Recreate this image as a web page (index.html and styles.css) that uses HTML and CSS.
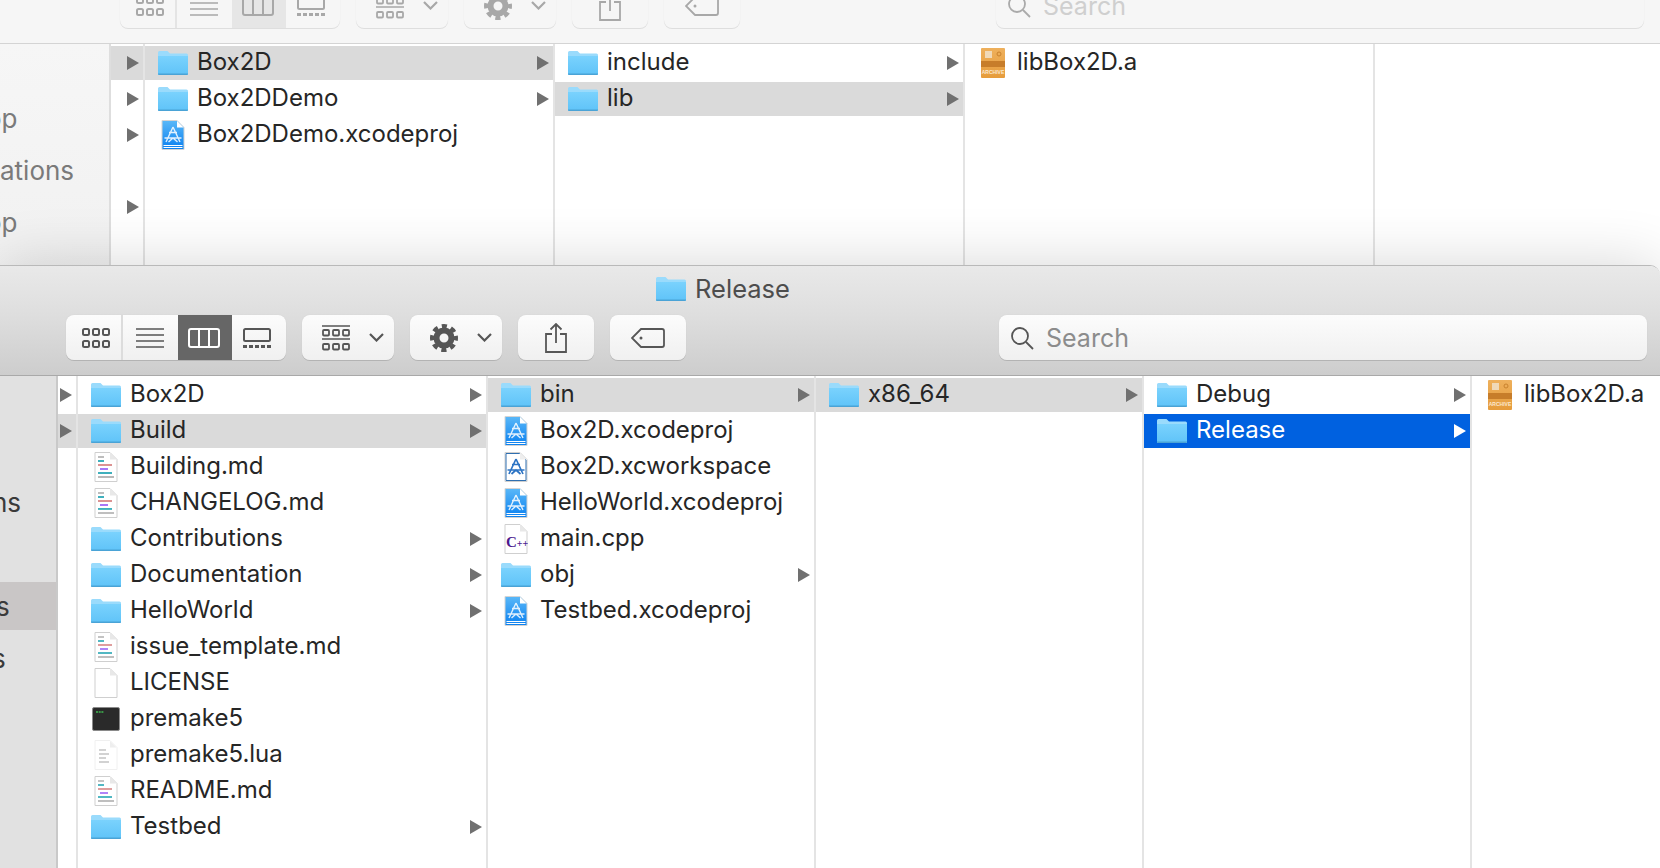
FILE: index.html
```html
<!DOCTYPE html>
<html lang="en">
<head>
<meta charset="UTF-8">
<title>Release</title>
<link rel="stylesheet" href="styles.css">
</head>
<body>
<svg class="defs">
  <defs>
    <linearGradient id="fold" x1="0" y1="0" x2="0" y2="1"><stop offset="0" stop-color="#7ad2fd"/><stop offset="1" stop-color="#5fc3f8"/></linearGradient>
    <linearGradient id="xblue" x1="0" y1="0" x2="0" y2="1"><stop offset="0" stop-color="#5ab8f8"/><stop offset="1" stop-color="#0a80f0"/></linearGradient>
    <linearGradient id="arch" x1="0" y1="0" x2="0" y2="1"><stop offset="0" stop-color="#eeb05c"/><stop offset="1" stop-color="#e69c3c"/></linearGradient>
  </defs>
  <symbol id="folder" viewBox="0 0 30 24">
    <path d="M1.5 0h8l2.5 2.5h16.5A1.5 1.5 0 0 1 30 4v18.5a1.5 1.5 0 0 1-1.5 1.5h-27A1.5 1.5 0 0 1 0 22.500V1.500A1.500 1.500 0 0 1 1.500 0z" fill="#9adbfc"/>
    <path d="M0 5h30v17.500a1.500 1.500 0 0 1-1.500 1.500h-27A1.500 1.500 0 0 1 0 22.500z" fill="url(#fold)"/>
    <path d="M0 22.500h30v.3a1.200 1.200 0 0 1-1.200 1.200H1.200A1.200 1.200 0 0 1 0 22.800z" fill="#4aa3d6"/>
  </symbol>
  <symbol id="xcode" viewBox="0 0 24 30">
    <path d="M1 .5h15l7 7v22H1z" fill="url(#xblue)" stroke="#d4d4d4"/>
    <path d="M16 1v6.500h6.500z" fill="#fff"/>
    <path d="M2.500 25.500h19M2.500 27.500h19" stroke="#fff" fill="none"/>
    <path d="M12 7l-7 15M12 7l7 15M3.500 18h17M8 12.500h8M7.500 22l4.500-4 4.500 4" stroke="#fff" stroke-opacity=".85" stroke-width="1.400" fill="none"/>
  </symbol>
  <symbol id="workspace" viewBox="0 0 24 30">
    <path d="M1 .5h15l7 7v22H1z" fill="#fff" stroke="#cfcfcf"/>
    <path d="M2 1.500h13.500l6.500 6.500v20.500H2z" fill="#fff" stroke="#2f6fb0"/>
    <path d="M16 1v6.500h6.500z" fill="#eee"/>
    <path d="M12 7l-7 15M12 7l7 15M3.500 18h17M8 12.500h8M7.500 22l4.500-4 4.500 4" stroke="#2d74c4" stroke-width="1.700" fill="none"/>
  </symbol>
  <symbol id="markdown" viewBox="0 0 24 30">
    <path d="M1 .5h15l7 7v22H1z" fill="#fff" stroke="#cfcfcf"/>
    <path d="M16 1v6.500h6.500z" fill="#e8e8e8"/>
    <path d="M4 5h6" stroke="#bdbdbd" stroke-width="1.800"/>
    <path d="M4 9h6" stroke="#3fb0bd" stroke-width="1.800"/>
    <path d="M4 13h14" stroke="#dc9393" stroke-width="1.800"/>
    <path d="M6 17h8" stroke="#a877f8" stroke-width="1.800"/>
    <path d="M4 21h14" stroke="#3fb0bd" stroke-width="1.800"/>
    <path d="M4 25h16" stroke="#b8b8b8" stroke-width="1.800"/>
  </symbol>
  <symbol id="blank" viewBox="0 0 24 30">
    <path d="M1 .5h15l7 7v22H1z" fill="#fff" stroke="#cfcfcf"/>
    <path d="M16 1v6.500h6.500z" fill="#e8e8e8"/>
  </symbol>
  <symbol id="plain" viewBox="0 0 24 30">
    <path d="M1 .5h15l7 7v22H1z" fill="#fff" stroke="#f0f0f0"/>
    <path d="M16 1v6.500h6.500z" fill="#eee"/>
    <path d="M5 10h7M5 14h10M5 18h7M5 22h10" stroke="#c4c4c4" stroke-width="1.300"/>
  </symbol>
  <symbol id="exec" viewBox="0 0 28 24">
    <rect x=".5" y=".5" width="27" height="23" rx="1.500" fill="#2a2a2a" stroke="#8a8a8a"/>
    <path d="M4 5h8" stroke="#3fb950" stroke-width="1.500" stroke-dasharray="2 .7"/>
  </symbol>
  <symbol id="archive" viewBox="0 0 24 30">
    <rect width="24" height="30" rx="1" fill="url(#arch)"/>
    <rect x="4" y="3" width="7" height="7" fill="#f0d9b8"/>
    <circle cx="18" cy="6" r="2" fill="none" stroke="#c9822e"/>
    <rect y="13" width="24" height="6" fill="#c77d2a"/>
  </symbol>
  <symbol id="t-icons" viewBox="0 0 28 20">
    <g fill="none" stroke="currentColor" stroke-width="2"><rect x="1" y="1" width="6" height="6" rx="1.500"/><rect x="11" y="1" width="6" height="6" rx="1.500"/><rect x="21" y="1" width="6" height="6" rx="1.500"/><rect x="1" y="13" width="6" height="6" rx="1.500"/><rect x="11" y="13" width="6" height="6" rx="1.500"/><rect x="21" y="13" width="6" height="6" rx="1.500"/></g>
  </symbol>
  <symbol id="t-list" viewBox="0 0 28 20">
    <path d="M0 1h28M0 7h28M0 13h28M0 19h28" stroke="currentColor" stroke-width="1.600" fill="none"/>
  </symbol>
  <symbol id="t-columns" viewBox="0 0 32 20">
    <rect x="1" y="1" width="30" height="18" rx="2" fill="none" stroke="currentColor" stroke-width="2"/>
    <path d="M11 1v18M21 1v18" stroke="currentColor" stroke-width="2"/>
  </symbol>
  <symbol id="t-gallery" viewBox="0 0 28 20">
    <rect x="1" y="1" width="26" height="12" rx="1.500" fill="none" stroke="currentColor" stroke-width="2"/>
    <path d="M0 18.500h28" stroke="currentColor" stroke-width="3" stroke-dasharray="4 2"/>
  </symbol>
  <symbol id="t-group" viewBox="0 0 28 26">
    <path d="M0 1h28M0 14h28" stroke="currentColor" stroke-width="1.600"/>
    <g fill="none" stroke="currentColor" stroke-width="1.800"><rect x="1" y="5" width="6" height="5.500" rx="1"/><rect x="11" y="5" width="6" height="5.500" rx="1"/><rect x="21" y="5" width="6" height="5.500" rx="1"/><rect x="1" y="19" width="6" height="5.500" rx="1"/><rect x="11" y="19" width="6" height="5.500" rx="1"/><rect x="21" y="19" width="6" height="5.500" rx="1"/></g>
  </symbol>
  <symbol id="t-chevron" viewBox="0 0 15 9">
    <path d="M1 1l6.500 6.500L14 1" fill="none" stroke="currentColor" stroke-width="2.200"/>
  </symbol>
  <symbol id="t-gear" viewBox="0 0 28 28">
    <circle cx="14" cy="14" r="7.500" fill="none" stroke="currentColor" stroke-width="6"/>
    <circle cx="14" cy="14" r="12" fill="none" stroke="currentColor" stroke-width="4" stroke-dasharray="5.200 4.225" stroke-dashoffset="2.600"/>
  </symbol>
  <symbol id="t-share" viewBox="0 0 22 30">
    <path d="M7 11H1v18h20V11h-6M11 20V1M5.500 6.500L11 1l5.500 5.500" fill="none" stroke="currentColor" stroke-width="1.800"/>
  </symbol>
  <symbol id="t-tag" viewBox="0 0 34 20">
    <path d="M10 1h21a2 2 0 0 1 2 2v14a2 2 0 0 1-2 2H10L1 10z" fill="none" stroke="currentColor" stroke-width="1.800"/>
    <circle cx="10" cy="10" r="1.500" fill="currentColor"/>
  </symbol>
  <symbol id="t-search" viewBox="0 0 24 24">
    <circle cx="10" cy="10" r="8" fill="none" stroke="currentColor" stroke-width="1.800"/>
    <path d="M16 16l7 7" stroke="currentColor" stroke-width="1.800"/>
  </symbol>
</svg>

<!-- window behind -->
<div class="window back">
  <div class="titlebar"></div>
  <div class="toolbar">
    <div class="seg">
      <div class="seg-item first"><svg class="t-icons"><use href="#t-icons"/></svg></div>
      <div class="seg-item second"><svg class="t-list"><use href="#t-list"/></svg></div>
      <div class="seg-item active"><svg class="t-columns"><use href="#t-columns"/></svg></div>
      <div class="seg-item fourth"><svg class="t-gallery"><use href="#t-gallery"/></svg></div>
    </div>
    <div class="btn drop"><svg class="t-group"><use href="#t-group"/></svg><svg class="t-chevron"><use href="#t-chevron"/></svg></div>
    <div class="btn drop"><svg class="t-gear"><use href="#t-gear"/></svg><svg class="t-chevron"><use href="#t-chevron"/></svg></div>
    <div class="btn"><svg class="t-share"><use href="#t-share"/></svg></div>
    <div class="btn"><svg class="t-tag"><use href="#t-tag"/></svg></div>
    <div class="search"><svg class="t-search"><use href="#t-search"/></svg><span>Search</span></div>
  </div>
  <div class="browser">
    <div class="sidebar">
      <div class="side-row cut-op">op</div>
      <div class="side-row">ations</div>
      <div class="side-row cut-op">op</div>
    </div>
    <div class="strip">
      <div class="strip-row on"><i class="arrow"></i></div>
      <div class="strip-row"><i class="arrow"></i></div>
      <div class="strip-row"><i class="arrow"></i></div>
      <div class="strip-row"></div>
      <div class="strip-row"><i class="arrow"></i></div>
    </div>
    <div class="col">
      <div class="row on"><svg class="ic-folder"><use href="#folder"/></svg><span>Box2D</span><i class="arrow"></i></div>
      <div class="row"><svg class="ic-folder"><use href="#folder"/></svg><span>Box2DDemo</span><i class="arrow"></i></div>
      <div class="row"><svg class="ic-file"><use href="#xcode"/></svg><span>Box2DDemo.xcodeproj</span></div>
    </div>
    <div class="col">
      <div class="row"><svg class="ic-folder"><use href="#folder"/></svg><span>include</span><i class="arrow"></i></div>
      <div class="row on"><svg class="ic-folder"><use href="#folder"/></svg><span>lib</span><i class="arrow"></i></div>
    </div>
    <div class="col">
      <div class="row"><svg class="ic-file" viewBox="0 0 24 30"><use href="#archive"/><text x="12" y="26" class="archive-text">ARCHIVE</text></svg><span>libBox2D.a</span></div>
    </div>
    <div class="col last"></div>
  </div>
</div>

<!-- front window -->
<div class="window front">
  <div class="titlebar"><svg class="ic-title"><use href="#folder"/></svg><span>Release</span></div>
  <div class="toolbar">
    <div class="seg">
      <div class="seg-item first"><svg class="t-icons"><use href="#t-icons"/></svg></div>
      <div class="seg-item second"><svg class="t-list"><use href="#t-list"/></svg></div>
      <div class="seg-item active"><svg class="t-columns"><use href="#t-columns"/></svg></div>
      <div class="seg-item fourth"><svg class="t-gallery"><use href="#t-gallery"/></svg></div>
    </div>
    <div class="btn drop"><svg class="t-group"><use href="#t-group"/></svg><svg class="t-chevron"><use href="#t-chevron"/></svg></div>
    <div class="btn drop"><svg class="t-gear"><use href="#t-gear"/></svg><svg class="t-chevron"><use href="#t-chevron"/></svg></div>
    <div class="btn"><svg class="t-share"><use href="#t-share"/></svg></div>
    <div class="btn"><svg class="t-tag"><use href="#t-tag"/></svg></div>
    <div class="search"><svg class="t-search"><use href="#t-search"/></svg><span>Search</span></div>
  </div>
  <div class="browser">
    <div class="sidebar">
      <div class="side-row cut-ns">ns</div>
      <div class="side-row"></div>
      <div class="side-row on cut-s1">s</div>
      <div class="side-row cut-s2">s</div>
    </div>
    <div class="strip">
      <div class="strip-row"><i class="arrow"></i></div>
      <div class="strip-row on"><i class="arrow"></i></div>
    </div>
    <div class="col first">
      <div class="row"><svg class="ic-folder"><use href="#folder"/></svg><span>Box2D</span><i class="arrow"></i></div>
      <div class="row on"><svg class="ic-folder"><use href="#folder"/></svg><span>Build</span><i class="arrow"></i></div>
      <div class="row"><svg class="ic-file"><use href="#markdown"/></svg><span>Building.md</span></div>
      <div class="row"><svg class="ic-file"><use href="#markdown"/></svg><span>CHANGELOG.md</span></div>
      <div class="row"><svg class="ic-folder"><use href="#folder"/></svg><span>Contributions</span><i class="arrow"></i></div>
      <div class="row"><svg class="ic-folder"><use href="#folder"/></svg><span>Documentation</span><i class="arrow"></i></div>
      <div class="row"><svg class="ic-folder"><use href="#folder"/></svg><span>HelloWorld</span><i class="arrow"></i></div>
      <div class="row"><svg class="ic-file"><use href="#markdown"/></svg><span>issue_template.md</span></div>
      <div class="row"><svg class="ic-file"><use href="#blank"/></svg><span>LICENSE</span></div>
      <div class="row"><svg class="ic-exec"><use href="#exec"/></svg><span>premake5</span></div>
      <div class="row"><svg class="ic-file"><use href="#plain"/></svg><span>premake5.lua</span></div>
      <div class="row"><svg class="ic-file"><use href="#markdown"/></svg><span>README.md</span></div>
      <div class="row"><svg class="ic-folder"><use href="#folder"/></svg><span>Testbed</span><i class="arrow"></i></div>
    </div>
    <div class="col">
      <div class="row on"><svg class="ic-folder"><use href="#folder"/></svg><span>bin</span><i class="arrow"></i></div>
      <div class="row"><svg class="ic-file"><use href="#xcode"/></svg><span>Box2D.xcodeproj</span></div>
      <div class="row"><svg class="ic-file"><use href="#workspace"/></svg><span>Box2D.xcworkspace</span></div>
      <div class="row"><svg class="ic-file"><use href="#xcode"/></svg><span>HelloWorld.xcodeproj</span></div>
      <div class="row"><svg class="ic-file" viewBox="0 0 24 30"><use href="#blank"/><text x="2" y="23" class="cpp-text">C<tspan class="cpp-plus">++</tspan></text></svg><span>main.cpp</span></div>
      <div class="row"><svg class="ic-folder"><use href="#folder"/></svg><span>obj</span><i class="arrow"></i></div>
      <div class="row"><svg class="ic-file"><use href="#xcode"/></svg><span>Testbed.xcodeproj</span></div>
    </div>
    <div class="col">
      <div class="row on"><svg class="ic-folder"><use href="#folder"/></svg><span>x86_64</span><i class="arrow"></i></div>
    </div>
    <div class="col">
      <div class="row"><svg class="ic-folder"><use href="#folder"/></svg><span>Debug</span><i class="arrow"></i></div>
      <div class="row sel"><svg class="ic-folder"><use href="#folder"/></svg><span>Release</span><i class="arrow"></i></div>
    </div>
    <div class="col last">
      <div class="row"><svg class="ic-file" viewBox="0 0 24 30"><use href="#archive"/><text x="12" y="26" class="archive-text">ARCHIVE</text></svg><span>libBox2D.a</span></div>
    </div>
  </div>
</div>
</body>
</html>
```

FILE: styles.css
```css
* { margin: 0; padding: 0; box-sizing: border-box; }
html, body { width: 1660px; height: 868px; overflow: hidden; }
body { background: #fff; font-family: Inter, "Liberation Sans", sans-serif; font-size: 24px; color: #262626; }
.defs { display: block; width: 0; height: 0; }
.cpp-text { font-family: "Liberation Serif", serif; font-size: 15px; font-weight: 700; fill: #4b1a8f; }
.cpp-plus { font-size: 10px; }
.archive-text { font-family: "Liberation Sans", sans-serif; font-size: 5px; font-weight: 700; fill: #fbe9cf; text-anchor: middle; }

/* windows sit on a free desktop */
.window { position: absolute; left: 0; width: 1660px; display: flex; flex-direction: column; overflow: hidden; }
.back { top: -66px; height: 400px; background: #fff; }
.front { top: 265px; height: 603px; border-radius: 0 10px 0 0; border-top: 1px solid #b9b9b9; background: #fff; box-shadow: 0 0 60px rgba(0, 0, 0, .16); }

.titlebar { height: 49px; padding: 0 214px 4px 0; display: flex; align-items: center; justify-content: center; color: #4d4d4d; font-size: 25.5px; }
.ic-title { width: 30px; height: 24px; margin-right: 9px; }

.toolbar { height: 61px; padding: 0 13px 15px 66px; display: flex; gap: 16px; border-bottom: 1px solid #a9a9a9; font-size: 25px; }
.front .titlebar { background: linear-gradient(#e9e9e9, #dedede); }
.front .toolbar { background: linear-gradient(#dedede, #cdcdcd); color: #565656; }
.back .titlebar, .back .toolbar { background: #f6f6f6; }
.back .toolbar { padding: 0 16px 15px 120px; color: #a8a8a8; border-bottom-color: #d4d4d4; }

.seg, .btn, .search { border-radius: 8px; background: linear-gradient(#fcfcfc, #f0f0f0); box-shadow: 0 1px 0 #b3b3b3, 0 0 1px #c4c4c4; }
.back .seg, .back .btn, .back .search { background: #f6f6f6; box-shadow: 0 1px 0 #dedede, 0 0 1px #e2e2e2; }
.seg { width: 220px; display: flex; overflow: hidden; }
.seg-item { width: 54px; display: flex; align-items: center; justify-content: center; }
.seg-item.first { width: 57px; padding-left: 4px; border-right: 2px solid #dcdcdc; }
.seg-item.second { width: 55px; padding-right: 2px; }
.seg-item.active { background: #666; color: #fff; padding-right: 2px; }
.seg-item.fourth { padding-right: 4px; }
.back .seg-item.first { border-right-color: #e4e4e4; }
.back .seg-item.active { background: #e6e6e6; color: #a8a8a8; }

.btn { width: 76px; display: flex; align-items: center; justify-content: center; }
.btn.drop { width: 92px; justify-content: flex-start; padding-left: 20px; }
.t-icons, .t-list, .t-gallery { width: 28px; height: 20px; }
.t-columns { width: 32px; height: 20px; }
.t-group { width: 28px; height: 26px; margin-right: 19px; }
.t-gear { width: 28px; height: 28px; margin-right: 19px; }
.t-chevron { width: 15px; height: 9px; }
.t-share { width: 22px; height: 30px; }
.t-tag { width: 34px; height: 20px; }

.search { width: 648px; margin-left: auto; display: flex; align-items: center; padding-left: 11px; color: #8c8c8c; }
.search span { margin-top: 1px; }
.t-search { width: 24px; height: 24px; margin-right: 12px; color: #555; }
.back .search { color: #cfcfcf; }
.back .t-search { color: #aaa; }

.browser { flex: 1; display: flex; background: #fff; }
.sidebar { width: 58px; flex: none; padding-top: 102px; background: #e1e1e1; border-right: 2px solid #c9c9c9; overflow: hidden; color: #3a3a3a; font-size: 26px; white-space: nowrap; }
.side-row { height: 48px; margin-bottom: 4px; line-height: 50px; }
.side-row.on { background: #c9c6c6; }
.cut-op { text-indent: -14px; }
.cut-ns { text-indent: -8px; }
.cut-s1 { text-indent: -4px; }
.cut-s2 { text-indent: -8px; }
.back .sidebar { width: 111px; padding-top: 50px; background: linear-gradient(#f6f6f6, #f0f0f0); border-right-color: #dedede; color: #7a7a7a; }

.strip { width: 20px; flex: none; padding-top: 2px; border-right: 2px solid #e4e4e4; }
.strip-row { height: 34px; margin-bottom: 2px; padding-left: 2px; display: flex; align-items: center; }
.strip-row.on { background: #dadada; }
.back .strip { width: 34px; }
.back .strip .strip-row { padding-left: 16px; }

.col { width: 328px; flex: none; padding-top: 2px; border-right: 2px solid #e4e4e4; }
.col.first { width: 410px; }
.col.last { flex: 1; border-right: 0; }
.back .col { width: 410px; }
.back .col.last { flex: 1; }

.row { height: 34px; margin-bottom: 2px; padding: 0 4px 0 13px; display: flex; align-items: center; white-space: nowrap; }
.row span { margin: 0 0 3px -1px; }
.row.on { background: #dadada; }
.row.sel { background: #0061e0; color: #fff; }
.ic-folder { width: 30px; height: 24px; margin-right: 10px; flex: none; }
.ic-file { width: 24px; height: 30px; margin: 0 13px 0 3px; flex: none; }
.ic-exec { width: 28px; height: 24px; margin: 0 11px 0 1px; flex: none; }

.arrow { width: 0; height: 0; flex: none; border-left: 12px solid #707070; border-top: 7.5px solid transparent; border-bottom: 7.5px solid transparent; }
.row .arrow { margin-left: auto; }
.row.sel .arrow { border-left-color: #fff; }
```
